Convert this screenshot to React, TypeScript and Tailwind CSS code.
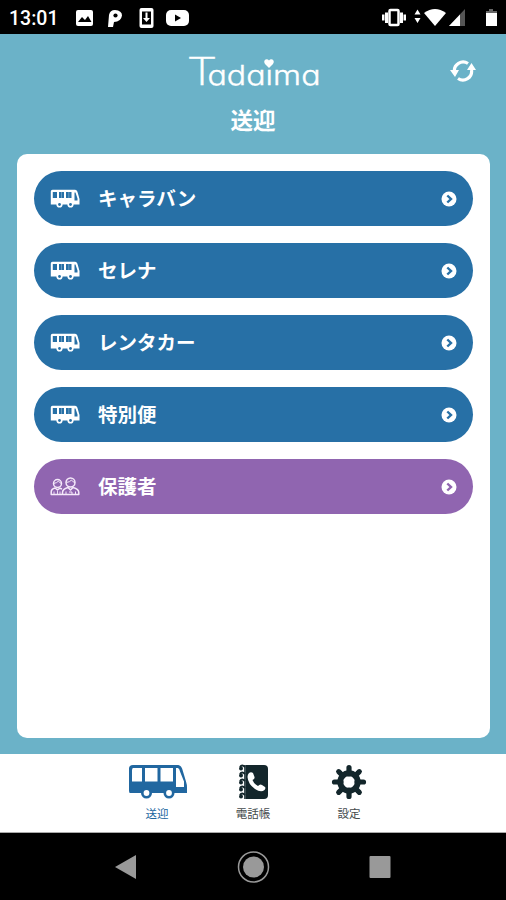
import React from "react";

function Bus({ className }: { className: string }) {
  return (
    <svg viewBox="0 0 58 35" className={className}>
      <path d="M4 0.500H48C52 .5 53 3 54 7L57 17Q58 20 58 23V28.500H1Q0 28.500 0 26V4Q0 .5 4 .5Z" fill="currentColor" />
      <path d="M4 3.500H13V17H3V6Q3 3.500 4 3.500ZM16 3.500H28.500V17H16ZM31.500 3.500H44V17H31.500ZM47 3.500H49Q50.500 4 51 7L55 17V22.500H47Z" fill="white" />
      <circle cx="17.500" cy="28.500" r="5.500" fill="currentColor" />
      <circle cx="40" cy="28.500" r="5.500" fill="currentColor" />
      <circle cx="17.500" cy="28.500" r="2.900" fill="white" />
      <circle cx="40" cy="28.500" r="2.900" fill="white" />
    </svg>
  );
}

function SmallBus() {
  return (
    <svg viewBox="0 0 30 19" className="h-[19px] w-[30px]" fill="white">
      <path d="M2.500 .8H25Q27 .8 27.800 4L29.500 10V15.500H.8V2.500Q.8.8 2.500.8Z" />
      <path d="M2.800 3H7V9H2.800ZM9 3H14V9H9ZM16 3H21.500V9H16ZM24.500 3.500H25.500L27.500 9.500V11.500H24.500Z" fill="#2770a6" />
      <path d="M11 3H12V9H11ZM18.300 3H19.300V9H18.300Z" opacity=".3" />
      <circle cx="9.500" cy="15.500" r="3.100" />
      <circle cx="20.500" cy="15.500" r="3.100" />
      <circle cx="9.500" cy="15.500" r="1.400" fill="#2770a6" />
      <circle cx="20.500" cy="15.500" r="1.400" fill="#2770a6" />
    </svg>
  );
}

function Family() {
  return (
    <svg viewBox="0 0 30 20" className="h-5 w-[30px]" fill="none" stroke="#f5e9fa" strokeWidth="1.500" strokeLinejoin="round">
      <circle cx="7.500" cy="6.500" r="4" />
      <path d="M3.500 6.500Q7 6 8.500 4Q9.500 6 11.500 6.500" strokeWidth="1" />
      <path d="M12 17.500H1.200V15Q1.200 12 5 11L7.500 12.800L10 11.200L12 12" />
      <path d="M4 14.500V17M7.500 13.500V17M10 14.500V17" strokeWidth=".9" />
      <circle cx="20.500" cy="5.500" r="4.500" />
      <path d="M16.500 5.500Q20 5 21.500 3Q22.500 5 25 5.500" strokeWidth="1" />
      <path d="M12.500 17.500V15.500Q12.500 12 18 10.500L20.500 13L23 10.500Q28.800 12 28.800 15.500V17.500Z" />
      <path d="M16 14.500V17M19 15H22V17M25.500 14.500V17" strokeWidth="1" />
    </svg>
  );
}

function Logo() {
  return (
    <svg
      viewBox="0 0 140 34"
      className="h-[34px] w-[140px] overflow-visible"
      fill="white"
      stroke="white"
      strokeWidth=".35"
      fontFamily="Inter, 'Liberation Sans', sans-serif"
      fontWeight="300"
      style={{ fontFeatureSettings: '"cv11" 1' }}
    >
      <text y="31">
        <tspan x="0.500" fontSize="38" fontWeight="200" textLength="31" lengthAdjust="spacingAndGlyphs">T</tspan>
        <tspan x="21.500" fontSize="27.500" textLength="113" lengthAdjust="spacingAndGlyphs">adaima</tspan>
      </text>
    </svg>
  );
}

function StatusBar() {
  return (
    <div className="flex h-[34px] items-center bg-black pl-[9px] pr-[7px] text-white">
      <span className="mt-[3px] w-[67px] font-[Roboto] text-[19.500px] font-medium leading-none">13:01</span>
      <svg viewBox="0 0 114 22" className="mt-px h-[22px] w-[114px]" fill="white">
        <rect y="3" width="17" height="16" rx="2" />
        <path d="M2 15L6 10L9 13L12 9L15.500 15Z" fill="black" />
        <path d="M32 20L33 8Q34 3 39 3Q46 3.500 46 8.500Q45 15 38 15L37 20Z" />
        <circle cx="39.500" cy="8.500" r="2.100" fill="black" />
        <rect x="63.500" y="1" width="14" height="20" rx="2" />
        <path d="M66 4.500H75V17.500H66Z" fill="black" />
        <path d="M69.500 5.500H71.500V11H74L70.500 15L67 11H69.500Z" />
        <rect x="90" y="3" width="23" height="16" rx="5" />
        <path d="M99 7.500L105 11L99 14.500Z" fill="black" />
      </svg>
      <svg viewBox="0 0 118 22" className="ml-auto h-[22px] w-[118px]" fill="white">
        <path d="M1 8.500H3.500V14.500H1ZM4 6.500H7V17H4ZM19 6.500H22V17H19ZM22.500 8.500H25V14.500H22.500Z" />
        <rect x="8.500" y="4" width="9" height="15" rx="1" fill="none" stroke="white" strokeWidth="2.500" />
        <path d="M33.500 8.500L36.500 3.500L39.500 8.500ZM33.500 12H39.500L36.500 17Z" />
        <path d="M43 7Q54 -1 65 7L54 20Z" />
        <path d="M84 3V20H68Z" fill="#555" />
        <path d="M79 8.500V20H68Z" />
        <path d="M108 3H112V5H116V20H105V5H108Z" />
        <path d="M108 3H112V5H116V7H105V5H108Z" fill="#666" />
      </svg>
    </div>
  );
}

function Row({ label, family = false }: { label: string; family?: boolean }) {
  return (
    <button className={`flex h-[55px] w-full shrink-0 items-center rounded-full px-4 text-white ${family ? "bg-[#9065b0]" : "bg-[#2770a6]"}`}>
      <span className="flex w-[48px] items-center">
        {family ? <Family /> : <SmallBus />}
      </span>
      <span className="-mt-[2px] text-[19.500px] font-bold leading-none">{label}</span>
      <svg viewBox="0 0 16 16" className="ml-auto h-4 w-4">
        <circle cx="8" cy="8" r="7.500" fill="white" />
        <path d="M6.300 4.500L10 8L6.300 11.500" fill="none" stroke={family ? "#9065b0" : "#2770a6"} strokeWidth="2.400" />
      </svg>
    </button>
  );
}

function PhoneBook() {
  return (
    <svg viewBox="0 0 32 36" className="h-9 w-8">
      <path d="M7 1H27Q31 1 31 5V31Q31 35 27 35H7Z" fill="#13262b" />
      <path d="M8 1V35" stroke="#6d7b7e" strokeWidth="1" />
      {[4, 11, 18, 25, 32].map((y) => (
        <g key={y}>
          <path d={`M3 ${y - 1}Q5 ${y - 4} 8 ${y - 1}`} fill="none" stroke="#13262b" strokeWidth="2" />
          <circle cx="4" cy={y + 0.5} r="2" fill="#13262b" />
        </g>
      ))}
      <path d="M12 9Q14 7.500 16 9L17.500 13Q18 15 15.500 16Q17 20 21 22Q23 19.500 25 21L28 23Q29 24 27.500 26Q24 29 18 25Q11 20 10.500 13Q10.500 10.500 12 9Z" fill="white" />
    </svg>
  );
}

function Gear() {
  return (
    <svg viewBox="0 0 36 36" className="h-9 w-9">
      <g stroke="#13262b" strokeWidth="5.200" strokeLinecap="round">
        <path d="M18 3.500V10M18 26V32.500M3.500 18H10M26 18H32.500M7.700 7.700L12 12M24 24L28.300 28.300M7.700 28.300L12 24M24 12L28.300 7.700" />
      </g>
      <circle cx="18" cy="18" r="8.800" fill="none" stroke="#13262b" strokeWidth="5.800" />
    </svg>
  );
}

export default function App() {
  return (
    <div className="flex h-[900px] w-[506px] flex-col overflow-hidden bg-[#6bb2c8] font-['Noto_Sans_CJK_JP',sans-serif]">
      <StatusBar />
      <header className="grid h-[120px] shrink-0 grid-cols-[1fr_134px_1fr] grid-rows-[54px_1fr] pt-5 text-white">
        <div className="relative col-start-2">
          <Logo />
          <svg viewBox="0 0 10 9" className="absolute left-[78px] top-[5px] h-[9px] w-[10px] bg-[#6bb2c8]" fill="white">
            <path d="M5 9L1 5Q-.8 2 1.500 .5Q3.700-.3 5 1.500Q6.300-.3 8.500.5Q10.800 2 9 5Z" />
          </svg>
        </div>
        <svg viewBox="0 0 26 24" className="mr-[30px] mt-[5px] h-6 w-[26px] justify-self-end" fill="none" stroke="white" strokeWidth="3.200">
          <path d="M4.500 13A8.700 8.700 0 0 1 18 4.500M21.500 11A8.700 8.700 0 0 1 8 19.500" />
          <path d="M0 11H9L5 18ZM17 11H26L21.500 4Z" fill="white" stroke="none" />
        </svg>
        <h1 className="col-span-3 text-center text-[22.500px] font-bold leading-[22px]">送迎</h1>
      </header>
      <main className="ml-[17px] mr-4 flex h-[584px] shrink-0 flex-col gap-[17px] rounded-[10px] bg-white px-[17px] pt-[17px]">
        <Row label="キャラバン" />
        <Row label="セレナ" />
        <Row label="レンタカー" />
        <Row label="特別便" />
        <Row label="保護者" family />
      </main>
      <nav className="mt-4 flex h-[79px] shrink-0 justify-center border-b border-[#aaa] bg-white pt-[10px] text-[11.500px] leading-none text-[#454b4d]">
        <div className="flex w-[96px] flex-col items-center text-[#2167a0]">
          <Bus className="ml-px h-[36px] w-[58px]" />
          <span className="mt-2">送迎</span>
        </div>
        <div className="flex w-[96px] flex-col items-center">
          <PhoneBook />
          <span className="mt-2">電話帳</span>
        </div>
        <div className="flex w-[96px] flex-col items-center">
          <Gear />
          <span className="mt-2">設定</span>
        </div>
      </nav>
      <footer className="flex flex-1 items-center justify-center bg-black">
        <svg viewBox="0 0 276 34" className="h-[34px] w-[276px]" fill="#999">
          <path d="M0 17L21 5V29Z" />
          <circle cx="138.500" cy="17" r="10.500" />
          <circle cx="138.500" cy="17" r="15" fill="none" stroke="#999" strokeWidth="1.500" />
          <rect x="254.500" y="6" width="21" height="22" rx="1" />
        </svg>
      </footer>
    </div>
  );
}
